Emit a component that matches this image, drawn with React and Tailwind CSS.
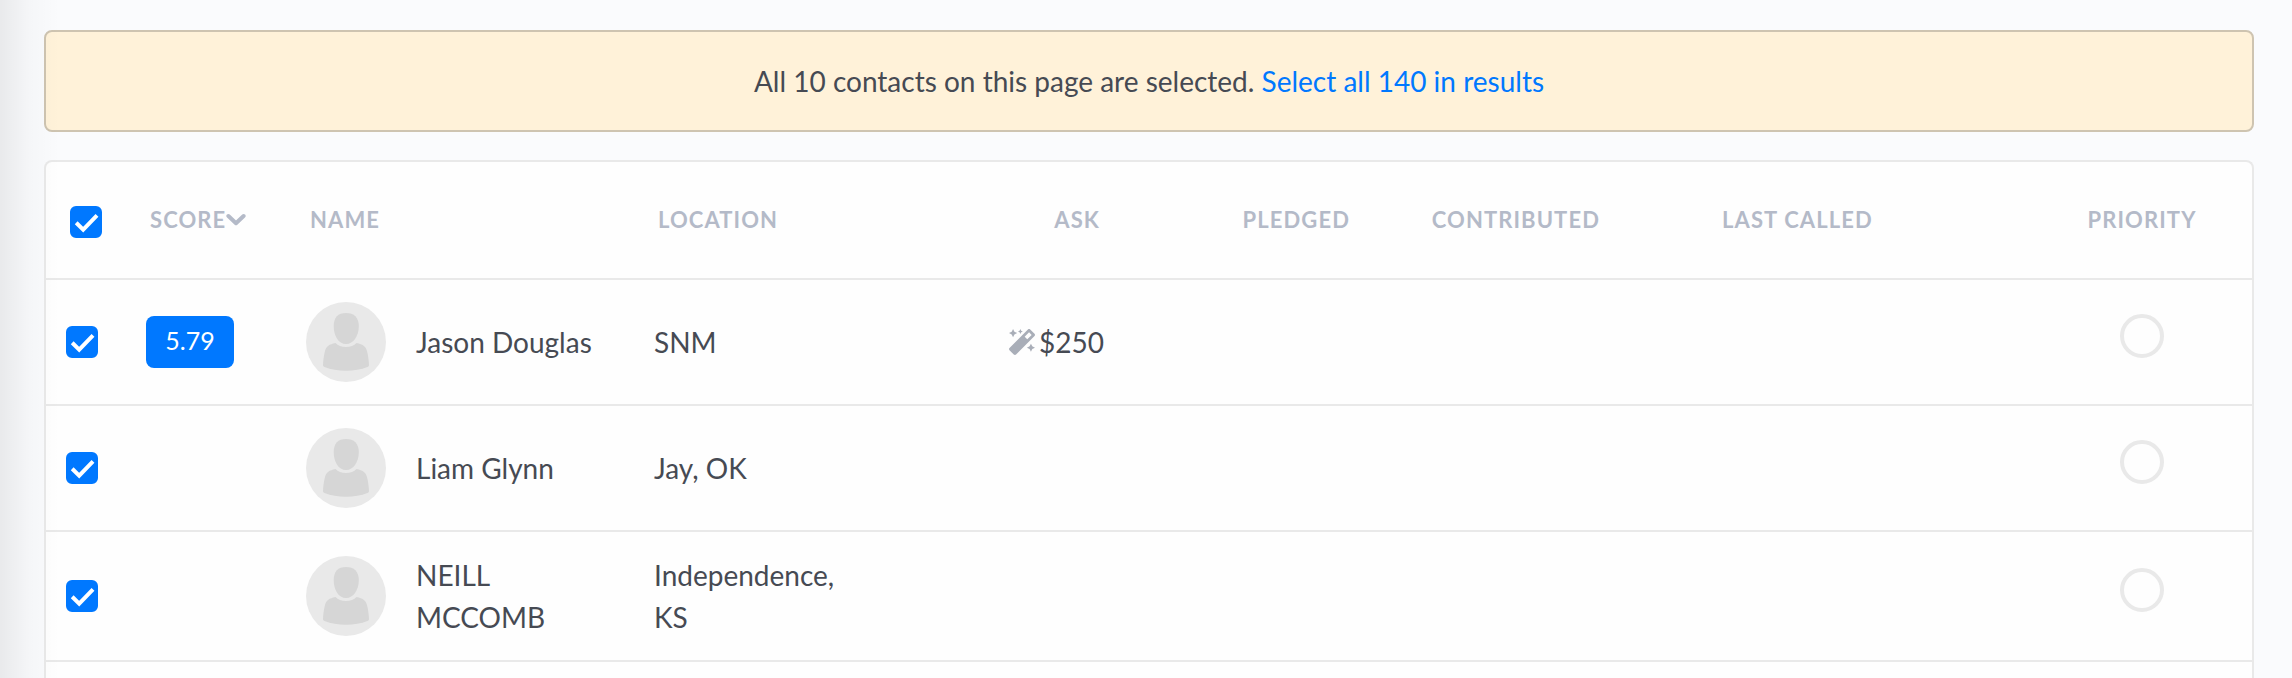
import React, { useState } from 'react';
import { FaMagic } from 'react-icons/fa';

// Contacts shown on the current page of results
const contacts = [
    { id: 1, score: "5.79", name: "Jason Douglas", location: "SNM", ask: "$250" },
    { id: 2, name: "Liam Glynn", location: "Jay, OK" },
    { id: 3, name: "NEILL MCCOMB", location: "Independence, KS" },
];

// Blue tick box: the native input is the box, the tick lies over it
const Checkbox = ({ label, checked, onChange }) => (
    <label className="relative block size-8">
        <input
            type="checkbox"
            aria-label={label}
            checked={checked}
            onChange={onChange}
            className="peer block size-8 appearance-none rounded-md border-2 border-[#e9e9e9] bg-white checked:border-[#0078ff] checked:bg-[#0078ff]"
        />
        <svg viewBox="0 0 32 32" className="pointer-events-none absolute inset-0 hidden size-8 peer-checked:block" fill="none" stroke="white" strokeWidth="4">
            <path d="M6.2 16.8L13.2 23.6L27 9.4" />
        </svg>
    </label>
);

// Placeholder portrait
const Avatar = () => (
    <svg viewBox="0 0 80 80" className="size-20 shrink-0">
        <circle cx="40" cy="40" r="40" fill="#e9e9e9" />
        <path fill="#d6d6d6" d="M40 11C48 11 52.8 15.5 52.8 24C52.8 34 47.5 42 40 42C32.5 42 27.7 34 27.7 24C27.7 15.5 32 11 40 11Z" />
        <path fill="#d6d6d6" d="M29.5 41C32 43.5 35.5 45 40 45C44.5 45 48 43.5 50.5 41C57 42.5 59.5 44 61 49C62.3 54 62.8 59 63 63C63 64 62.6 64.5 61.5 65C55 67.5 48 68.7 40 68.7C32 68.7 25 67.5 18.5 65C17.4 64.5 17 64 17 63C17.2 59 17.7 54 19 49C20.5 44 23 42.5 29.5 41Z" />
    </svg>
);

const ContactRow = ({ contact, checked, onToggle }) => (
    <tr className="border-b-2 border-[#e9e9e9]">
        <td className="py-[22px] pl-5">
            <Checkbox label={`Select ${contact.name}`} checked={checked} onChange={onToggle} />
        </td>
        <td className="px-5">
            {contact.score && (
                <span className="inline-flex h-[52px] w-[88px] items-center justify-center rounded-lg bg-[#0078ff] pb-1 align-middle text-[25px] leading-none text-white">
                    {contact.score}
                </span>
            )}
        </td>
        <td className="px-5 py-[22px]">
            <div className="flex items-center gap-[30px]">
                <Avatar />
                <span>{contact.name}</span>
            </div>
        </td>
        <td className="px-5">{contact.location}</td>
        <td className="px-5">
            {contact.ask && (
                <div className="flex items-center justify-end gap-1">
                    <FaMagic className="size-[26px] text-[#a9aeb8]" />
                    <span>{contact.ask}</span>
                </div>
            )}
        </td>
        <td className="px-5" />
        <td className="px-5" />
        <td className="px-5" />
        <td className="px-5">
            <div className="flex justify-center pb-3">
                <button type="button" aria-label={`Set priority for ${contact.name}`} className="size-11 rounded-full border-4 border-[#e9e9e9]" />
            </div>
        </td>
    </tr>
);

const App = () => {
    const [selected, setSelected] = useState(contacts.map((c) => c.id));
    const allSelected = selected.length === contacts.length;

    const toggle = (id) =>
        setSelected((ids) => (ids.includes(id) ? ids.filter((x) => x !== id) : [...ids, id]));

    const toggleAll = () => setSelected(allSelected ? [] : contacts.map((c) => c.id));

    return (
        <main className="relative flex h-screen flex-col gap-7 overflow-hidden bg-[#fafbfd] pt-[30px] pr-[38px] pl-11 font-['Lato',sans-serif] text-[28px] leading-[42px] text-[#464a53]">

            {/* Selection notice */}
            <div className="rounded-lg border-2 border-[#cec4b1] bg-[#fff2d9] py-7 text-center">
                All 10 contacts on this page are selected.{" "}
                <a href="#all" className="text-[#0078ff]">Select all 140 in results</a>
            </div>

            {/* Contacts table */}
            <div className="flex-1 overflow-hidden rounded-t-lg border-2 border-b-0 border-[#e9e9e9] bg-[#fefefe]">
                <table className="w-full table-fixed border-collapse">
                    <colgroup>
                        <col className="w-[80px]" />
                        <col className="w-[160px]" />
                        <col className="w-[348px]" />
                        <col className="w-[250px]" />
                        <col className="w-[240px]" />
                        <col className="w-[250px]" />
                        <col className="w-[250px]" />
                        <col className="w-[408px]" />
                        <col className="w-[220px]" />
                    </colgroup>
                    <thead>
                        <tr className="h-[117px] border-b-2 border-[#e9e9e9] text-left text-[22px] tracking-wider text-[#b4bac8]">
                            <th className="pt-1 pl-6">
                                <Checkbox label="Select all contacts on this page" checked={allSelected} onChange={toggleAll} />
                            </th>
                            <th className="px-6">
                                <button type="button" className="flex items-center font-bold tracking-wider">
                                    SCORE
                                    <svg viewBox="0 0 20 14" className="h-[14px] w-5" fill="none" stroke="currentColor" strokeWidth="4" strokeLinecap="round" strokeLinejoin="round">
                                        <path d="M2.4 3L10 10.2L17.6 3" />
                                    </svg>
                                </button>
                            </th>
                            <th className="px-6">NAME</th>
                            <th className="px-6">LOCATION</th>
                            <th className="px-6 text-right">ASK</th>
                            <th className="px-6 text-right">PLEDGED</th>
                            <th className="px-6 text-right">CONTRIBUTED</th>
                            <th className="pl-[98px]">LAST CALLED</th>
                            <th className="text-center">PRIORITY</th>
                        </tr>
                    </thead>
                    <tbody>
                        {contacts.map((c) => (
                            <ContactRow key={c.id} contact={c} checked={selected.includes(c.id)} onToggle={() => toggle(c.id)} />
                        ))}
                    </tbody>
                </table>
            </div>

            {/* Shadow cast by the sidebar */}
            <div className="pointer-events-none absolute inset-y-0 left-0 w-[60px] bg-linear-to-r from-black/7 via-black/2 to-transparent" />
        </main>
    );
};

export default App;
